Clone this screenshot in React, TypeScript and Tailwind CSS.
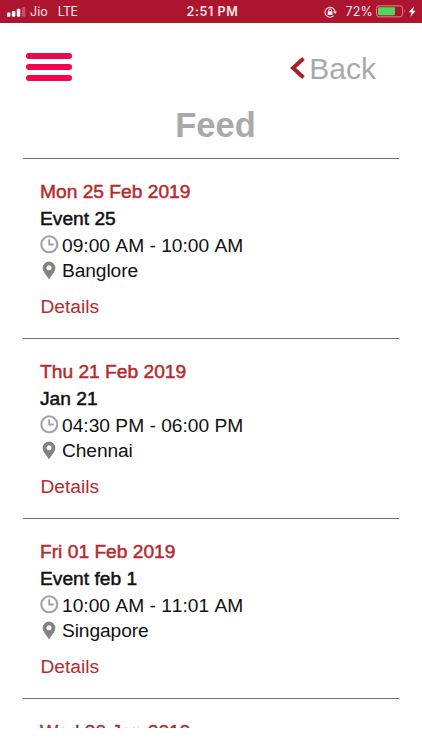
type FeedEvent = {
  date: string;
  title?: string;
  time?: string;
  place?: string;
};

const events: FeedEvent[] = [
  {
    date: "Mon 25 Feb 2019",
    title: "Event 25",
    time: "09:00 AM - 10:00 AM",
    place: "Banglore",
  },
  {
    date: "Thu 21 Feb 2019",
    title: "Jan 21",
    time: "04:30 PM - 06:00 PM",
    place: "Chennai",
  },
  {
    date: "Fri 01 Feb 2019",
    title: "Event feb 1",
    time: "10:00 AM - 11:01 AM",
    place: "Singapore",
  },
  {
    date: "Wed 30 Jan 2019",
  },
];

const StatusBar = () => {
  return (
    <div className="grid h-[22.5px] w-full shrink-0 grid-cols-3 items-center bg-[#ad152f] pt-[1px] font-['Inter',sans-serif] text-[12.5px] leading-none text-[#fbe3e7]">
      <div className="flex items-center pl-[7px]">
        <svg width="19" height="10" viewBox="0 0 19 10">
          <rect x="0" y="5.5" width="3.5" height="4.2" rx="1" fill="#fff" />
          <rect x="4.9" y="4" width="3.5" height="5.7" rx="1" fill="#fff" />
          <rect x="9.8" y="1.7" width="3.5" height="8" rx="1" fill="#fff" />
          <rect x="14.8" y="0" width="3.5" height="9.7" rx="1" fill="#c75266" />
        </svg>
        <span className="ml-[4px]">Jio</span>
        <span className="ml-[10px] tracking-[-0.6px]">LTE</span>
      </div>
      <span className="pl-[3px] text-center font-semibold tracking-[0.6px]">
        2:51 PM
      </span>
      <div className="flex items-center justify-end pr-[5px]">
        <svg width="13" height="12" viewBox="0 0 13 12" fill="none">
          <path
            d="M9.6 9.7A5 5 0 1 1 11 6.2"
            stroke="#fbe3e7"
            strokeWidth="1.1"
          />
          <path d="M9 5.6h4l-2 2.5z" fill="#fbe3e7" />
          <rect x="3.7" y="5.3" width="4.8" height="3.6" rx="0.5" fill="#fff" />
          <path d="M4.7 5.5V4.3a1.4 1.4 0 0 1 2.8 0v1.2" stroke="#fff" />
        </svg>
        <span className="ml-[8px] tracking-[0.2px]">72%</span>
        <svg className="ml-[3px]" width="41" height="13" viewBox="0 0 41 13">
          <rect
            x="0.5"
            y="0.8"
            width="26"
            height="11"
            rx="2.6"
            fill="none"
            stroke="#d9808e"
          />
          <rect x="2" y="2.3" width="17" height="8" rx="1" fill="#4fd65f" />
          <path d="M28 4.6q1.6 1.7 0 3.5z" fill="#d9808e" />
          <path d="M38 1.3 32.8 7.3h2.9L34.3 12 39.6 5.7h-2.8z" fill="#fff" />
        </svg>
      </div>
    </div>
  );
};

const ClockIcon = () => {
  return (
    <svg width="19" height="19" viewBox="0 0 19 19" fill="none">
      <circle cx="9.3" cy="9.3" r="8" stroke="#a2a2a2" strokeWidth="2.1" />
      <path d="M9.2 4.2v5.3h4.6" stroke="#a2a2a2" strokeWidth="1.8" />
    </svg>
  );
};

const PinIcon = () => {
  return (
    <svg width="14" height="19" viewBox="0 0 14 19">
      <path
        fill="#828282"
        fillRule="evenodd"
        d="M7 .6a6.3 6.3 0 0 0-6.3 6.3C.7 11 4.7 14.2 7 18.5c2.3-4.3 6.3-7.5 6.3-11.6A6.3 6.3 0 0 0 7 .6zm0 3.7a2.5 2.5 0 1 1 0 5 2.5 2.5 0 0 1 0-5z"
      />
    </svg>
  );
};

const EventCard = ({ event }: { event: FeedEvent }) => {
  return (
    <article className="h-[180px] shrink-0 border-t border-[#707070] pl-[17px] pt-[18px] text-[19.2px] leading-[27px] text-[#111] [font-kerning:none]">
      <h2 className="h-[27px] pt-[1px] text-[#b52b2d] [-webkit-text-stroke:0.5px_#b52b2d]">
        {event.date}
      </h2>
      {event.title && (
        <>
          <h3 className="h-[27px] pt-[1px] [-webkit-text-stroke:0.5px_#111]">
            {event.title}
          </h3>
          <div className="flex h-[28px] items-center">
            <ClockIcon />
            <span className="ml-[3px] pt-[1px]">{event.time}</span>
          </div>
          <div className="flex h-[24px] items-center">
            <span className="flex w-[22px] pl-[2px]">
              <PinIcon />
            </span>
            <span className="tracking-[-0.1px]">{event.place}</span>
          </div>
          <a className="mt-[10px] block pl-[0.5px] text-[#b52b2d]">Details</a>
        </>
      )}
    </article>
  );
};

const App = () => {
  return (
    <main className="flex h-[750px] w-[422px] flex-col overflow-hidden bg-white font-['Liberation_Sans',Arial,sans-serif]">
      <StatusBar />
      <header className="flex h-[80px] shrink-0 items-center justify-between pl-[26px] pr-[46px] pt-[10px]">
        <button className="mb-[1px] flex w-[46px] flex-col gap-[5px]">
          <span className="h-[6px] rounded-full bg-[#ef0650]" />
          <span className="h-[6px] rounded-full bg-[#ef0650]" />
          <span className="h-[6px] rounded-full bg-[#ef0650]" />
        </button>
        <button className="flex items-center text-[30px] leading-none text-[#a9a9a9]">
          <svg width="17" height="22" viewBox="0 0 17 22" fill="none">
            <path d="M14.5 1.5 4 11l10.5 9.5" stroke="#aa2029" strokeWidth="4" />
          </svg>
          <span className="ml-[3px] pt-[2px]">Back</span>
        </button>
      </header>
      <h1 className="h-[55px] shrink-0 pl-[9px] pt-[2px] text-center text-[34.5px] font-bold leading-[40px] text-[#a9a9a9]">
        Feed
      </h1>
      <section className="flex h-[570px] shrink-0 flex-col overflow-hidden pl-[23px] pr-[23px]">
        {events.map((event) => (
          <EventCard key={event.date} event={event} />
        ))}
      </section>
    </main>
  );
};

export default App;
